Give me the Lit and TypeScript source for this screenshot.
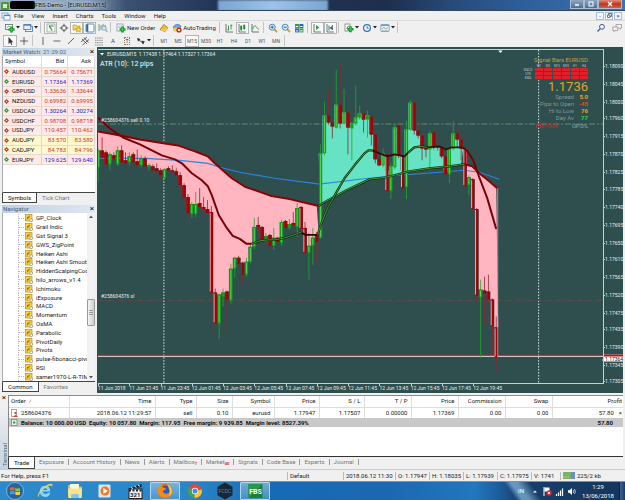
import { LitElement, html, svg, css } from "lit";
import { customElement } from "lit/decorators.js";
import { classMap } from "lit/directives/class-map.js";

/* ---------- shared styles ---------- */
const base = css`
  * { box-sizing: border-box; }
  button {
    font: inherit; color: inherit; background: none; border: 0; padding: 0; margin: 0;
    display: flex; align-items: center; justify-content: center; white-space: nowrap;
  }
  svg { display: block; flex: none; }
`;

/* ---------- icons ---------- */
const icon = (body: unknown, w = 10, h = 10) =>
  html`<svg width=${w} height=${h} viewBox="0 0 ${w} ${h}" aria-hidden="true">${body}</svg>`;

const plus = (x: number, y: number) =>
  svg`<path d="M${x} ${y - 3}v6M${x - 3} ${y}h6" stroke="#0a8f1c" stroke-width="2.4"/><path d="M${x} ${y - 2}v4M${x - 2} ${y}h4" stroke="#2fd045" stroke-width="1"/>`;

const I = {
  mdi: icon(svg`<rect x="1" y="2" width="6" height="5" fill="#fff" stroke="#5c93c8" stroke-width=".8"/><rect x="3" y="4" width="6" height="5" fill="#fff" stroke="#5c93c8" stroke-width=".8"/><path d="M3 4.6h6" stroke="#3f7fc0"/>`),
  newChart: icon(svg`<rect x=".5" y="1.5" width="7" height="5" fill="#fff" stroke="#4b7a56" stroke-width=".8"/><path d="M2 5l1.5-2 1.5 1" stroke="#2c8a3a" stroke-width=".7" fill="none"/>${plus(6.5, 6.5)}`),
  profiles: icon(svg`<rect x="2.5" y="3.5" width="7" height="5" fill="#fff" stroke="#4f83ba" stroke-width=".9"/><rect x=".8" y="1.5" width="7" height="5" fill="#e9f2fb" stroke="#4f83ba" stroke-width=".9"/><path d="M1 2.2h7" stroke="#3f7fc0"/>`),
  watch: icon(svg`<rect x="1" y="1" width="8" height="8" fill="#f7fbf5" stroke="#7aa27c" stroke-width=".7"/><path d="M3 3.2l2.5 3M3 3h2M6.5 7H4.8" stroke="#228b3a" stroke-width="1.1" fill="none"/><path d="M5 3h2.5" stroke="#3b6fb5"/>`),
  cross: icon(svg`<circle cx="5" cy="5" r="2.6" fill="none" stroke="#666" stroke-width=".9"/><path d="M5 .8v3M5 6.2v3M.8 5h3M6.2 5h3" stroke="#555" stroke-width=".9"/>`),
  nav: icon(svg`<path d="M1 2h3l1 1h3v4H1z" fill="#f3d36a" stroke="#b58a1a" stroke-width=".6"/><path d="M6.5 3.8l1 1.8 2 .3-1.5 1.3.4 2-1.9-1-1.9 1 .4-2L3.5 5.9l2-.3z" fill="#ffdf3a" stroke="#a67a10" stroke-width=".5"/>`),
  term: icon(svg`<rect x="1" y="1" width="8" height="8" rx="1" fill="#fff" stroke="#4b7cb8" stroke-width=".9"/><rect x="1.3" y="1.3" width="2" height="7.4" fill="#2d66a8"/>`),
  tester: icon(svg`<path d="M1 1v7M3 2v5M5 1v4M7 2v3" stroke="#5b9c72" stroke-width=".9"/><circle cx="6" cy="5" r="2.2" fill="#dcebf8" fill-opacity=".7" stroke="#6f93b8" stroke-width=".8"/><path d="M7.6 6.7L9.4 9" stroke="#8aa" stroke-width="1.2"/>`),
  order: icon(svg`<rect x="1" y="1" width="6" height="7" fill="#fff" stroke="#77889a" stroke-width=".7"/><path d="M2 3h4M2 4.5h3" stroke="#7d9cc0" stroke-width=".6"/>${plus(6.5, 6.5)}`),
  gold: icon(svg`<path d="M1 6.5L4.8 1.5 9 4.8 6 8.5z" fill="#f0bd28" stroke="#9a6b0c" stroke-width=".7"/><path d="M2 6.5l4 1.2 2.5-3" fill="none" stroke="#fbe79a" stroke-width=".8"/>`),
  auto: icon(svg`<path d="M1 4q4-5 8-1l-1 3H2z" fill="#6fa6d8" stroke="#3a6d9d" stroke-width=".6"/><ellipse cx="4" cy="6.5" rx="3" ry="2" fill="#e8c95c"/><circle cx="7" cy="7" r="2.6" fill="#d8261c"/><rect x="6" y="6" width="2" height="2" fill="#fff"/>`),
  bars: icon(svg`<path d="M4.5 2.5v5M3.3 6.5h1.2M7 1.5v5M7 2.5h1.3" stroke="#2c8c45" stroke-width=".9" fill="none"/><path d="M2 1v8h7" stroke="#456" stroke-width=".8" fill="none"/>`),
  candles: icon(svg`<path d="M2 1v8h7" stroke="#456" stroke-width=".8" fill="none"/><rect x="3.2" y="3" width="2" height="4" fill="#25a53c"/><rect x="6.2" y="2" width="2" height="4" fill="#25a53c"/><path d="M4.2 2v6M7.2 1v6" stroke="#14752a" stroke-width=".6"/>`),
  line: icon(svg`<path d="M2 1v8h7" stroke="#456" stroke-width=".8" fill="none"/><path d="M2.5 6.5Q4.5 1 6 3.5T9 6.5" stroke="#2c9c45" stroke-width=".9" fill="none"/>`),
  zin: icon(svg`<path d="M6 6l3 3" stroke="#d3a320" stroke-width="1.8"/><circle cx="4.2" cy="4.2" r="3" fill="#dff0fb" stroke="#3c7cb6" stroke-width=".9"/><path d="M2.7 4.2h3M4.2 2.7v3" stroke="#1f62a8"/>`),
  zout: icon(svg`<path d="M6 6l3 3" stroke="#d3a320" stroke-width="1.8"/><circle cx="4.2" cy="4.2" r="3" fill="#dff0fb" stroke="#3c7cb6" stroke-width=".9"/><path d="M2.7 4.2h3" stroke="#1f62a8"/>`),
  tile: icon(svg`<rect x="1" y="1" width="4" height="4" fill="#2f9d40"/><rect x="5.4" y="1" width="4" height="4" fill="#2c62b0"/><rect x="1" y="5.4" width="4" height="4" fill="#2c62b0"/><rect x="5.4" y="5.4" width="4" height="4" fill="#2f9d40"/><path d="M1.7 3.5h2.6M6.1 3.5h2.6M1.7 7.9h2.6M6.1 7.9h2.6" stroke="#fff"/>`),
  scroll: icon(svg`<path d="M2 1v8h7" stroke="#456" stroke-width=".8" fill="none"/><path d="M4 2v5l3.5-2.5z" fill="#3a9b4c"/>`),
  shift: icon(svg`<path d="M2 1v8h7M7.5 2v5" stroke="#456" stroke-width=".8" fill="none"/><path d="M4 2.5v5" stroke="#2c8c45"/><path d="M7 3L4.5 5 7 6.8z" fill="#355f9c"/>`),
  ind: icon(svg`<rect x="1" y="1" width="5" height="7" fill="#fff" stroke="#5e7d64" stroke-width=".7"/><path d="M3 6q0-3 2-3" stroke="#333" stroke-width=".7" fill="none"/>${plus(6.5, 6.2)}`),
  clock: icon(svg`<circle cx="5" cy="5" r="4" fill="#2e74b8"/><circle cx="5" cy="5" r="2.8" fill="#eef6fc"/><path d="M5 3v2.2h1.8" stroke="#345" stroke-width=".7" fill="none"/>`),
  tpl: icon(svg`<rect x=".8" y="1.5" width="8.4" height="7" rx=".8" fill="#eaf2f8" stroke="#6d93b4" stroke-width=".8"/><path d="M1 2.5h8" stroke="#6a9bc6"/><path d="M2 6l2-2 1.5 2L8 4.3" stroke="#7aa57f" stroke-width=".7" fill="none"/><path d="M2 7.3h6" stroke="#999" stroke-width=".6"/>`),
  arrow: icon(svg`<path d="M3.5 1v7l1.7-1.5L6.3 9l1-.5-1-2.3h2z" fill="#333"/>`),
  plusThin: icon(svg`<path d="M5 1v8M1 5h8" stroke="#444" stroke-width=".8"/>`),
  vline: icon(svg`<path d="M5 1v8" stroke="#555" stroke-width=".9"/>`),
  hline: icon(svg`<path d="M1.5 5h7" stroke="#555" stroke-width=".9"/>`),
  trend: icon(svg`<path d="M2 8l6-6" stroke="#555" stroke-width=".9"/>`),
  chan: icon(svg`<path d="M1 6l6-5M2.5 9L9 3.500M2 3l5 5M4 1.5l4.5 5" stroke="#444" stroke-width=".8"/>`),
  fib: icon(svg`<path d="M1 2h8M1 4.3h8M1 6.6h8M1 9h8" stroke="#666" stroke-width=".7" stroke-dasharray="1.5 .6"/>`),
  arrows: icon(svg`<path d="M1 2l3.5 1L2 5.5zM5.5 4.5L9 5.5 6.5 8z" fill="#333"/><path d="M3 4l5 4" stroke="#333" stroke-width=".8"/>`),
  search: icon(svg`<circle cx="6" cy="3.8" r="2.4" fill="#fff" stroke="#3d4fa0" stroke-width="1"/><path d="M4.3 5.6L1.5 8.5" stroke="#3d4fa0" stroke-width="1.3"/>`),
  chat: icon(svg`<path d="M4 1.5h5.5v3.5H8.5v1.3L7.3 5H4z" fill="#f4f4f4" stroke="#888" stroke-width=".7"/><path d="M.8 4h5v3.5H3L2 8.8V7.5H.8z" fill="#f4f4f4" stroke="#888" stroke-width=".7"/>`),
};

/* ---------- market watch ---------- */
type Quote = [string, string, string, "up" | "down", "pink" | "yellow"];
const quotes: Quote[] = [
  ["AUDUSD", "0.75664", "0.75671", "down", "pink"],
  ["EURUSD", "1.17364", "1.17369", "up", "pink"],
  ["GBPUSD", "1.33636", "1.33644", "down", "pink"],
  ["NZDUSD", "0.69982", "0.69995", "down", "pink"],
  ["USDCAD", "1.30264", "1.30274", "up", "pink"],
  ["USDCHF", "0.98708", "0.98718", "down", "pink"],
  ["USDJPY", "110.457", "110.462", "down", "pink"],
  ["AUDJPY", "83.570", "83.580", "down", "yellow"],
  ["CADJPY", "84.783", "84.796", "down", "yellow"],
  ["EURJPY", "129.625", "129.640", "up", "pink"],
];

@customElement("market-watch")
class MarketWatch extends LitElement {
  static styles = [base, css`
    :host { display: flex; flex-direction: column; min-height: 0; min-width: 0; }
    .title { height: 8px; display: flex; align-items: center; justify-content: space-between; background: linear-gradient(90deg, #bfd0e0, #dfe7ef); color: #4c6478; padding: 0 1px; }
    .title button { color: #111; font-size: 8px; line-height: 8px; }
    .box { flex: 1; background: #fff; border-left: 1px solid #aaa; border-bottom: 1px solid #444; overflow: hidden; }
    table { width: 100%; border-collapse: collapse; table-layout: fixed; height: 109px; line-height: 8px; }
    th { font-weight: 400; text-align: right; padding: 0 3px 0 0; height: 11px; border-right: 1px solid #ddd; border-bottom: 1px solid #ddd; color: #222; }
    th:first-child { width: 38px; text-align: left; padding-left: 2px; }
    td { padding: 0 1px; text-align: right; border-right: 1px solid #e3d5d0; border-bottom: 1px solid #e6d8d2; }
    td:first-child { text-align: left; color: #111; }
    .pink { background: #ffeae8; }
    .yellow { background: #fff8cf; }
    .down { color: #d0382c; }
    .up { color: #2722c8; }
    .sym { display: flex; align-items: center; gap: 3px; }
    .tabs { height: 10px; display: flex; }
    .tabs button { padding: 0 5px; color: #777; }
    .tabs .on { background: #fff; color: #111; border: 1px solid #444; border-top: 0; }
  `];
  render() {
    return html`
      <div class="title"><span>Market Watch: 21:29:02</span><button aria-label="Close">×</button></div>
      <div class="box"><table>
        <thead><tr><th>Symbol</th><th>Bid</th><th>Ask</th></tr></thead>
        <tbody>${quotes.map(([s, b, a, d, c]) => html`<tr class=${c}>
          <td><span class="sym"><svg width="5" height="5" viewBox="0 0 5 5"><path d="M2.5 0L5 2.5 2.5 5 0 2.5z" fill=${d === "up" ? "#2ea043" : "#c0442c"}/><circle cx="2.5" cy="2.5" r=".6" fill="#fff"/></svg>${s}</span></td>
          <td class=${d}>${b}</td><td class=${d}>${a}</td></tr>`)}</tbody>
      </table></div>
      <div class="tabs"><button class="on">Symbols</button><button>Tick Chart</button></div>`;
  }
}

/* ---------- navigator ---------- */
const indicators = ["GP_Clock", "Grail Indic", "Gst Signal 3", "GWS_ZigPoint", "Heiken Ashi", "Heiken Ashi Smoothed", "HiddenScalpingCode", "hilo_arrows_v1.4", "Ichimoku", "iExposure", "MACD", "Momentum", "OsMA", "Parabolic", "PivotDaily", "Pivots", "pulse-fibonacci-pivot", "RSI", "samer1970-L-R-TIME"];

@customElement("nav-panel")
class NavPanel extends LitElement {
  static styles = [base, css`
    :host { display: flex; flex-direction: column; min-height: 0; min-width: 0; }
    .title { height: 8px; display: flex; align-items: center; justify-content: space-between; background: linear-gradient(90deg, #bfd0e0, #dfe7ef); color: #4c6478; padding: 0 1px; }
    .title button { color: #111; font-size: 8px; line-height: 8px; }
    .box { flex: 1; min-height: 0; display: flex; background: #fff; border-left: 1px solid #aaa; border-bottom: 1px solid #444; }
    ul { flex: 1; min-width: 0; list-style: none; margin: 0; padding: 1px 0 0 15px; display: flex; flex-direction: column; }
    li { flex: 1; min-height: 0; display: flex; align-items: center; gap: 3px; white-space: nowrap; overflow: hidden; border-left: 1px dotted #bbb; color: #222; }
    li::before { content: ""; width: 5px; border-top: 1px dotted #bbb; margin-right: -2px; flex: none; }
    .bar { width: 8px; flex: none; background: #f2f2f2; display: flex; flex-direction: column; align-items: center; justify-content: space-between; padding: 2px 0; }
    .rail { flex: 1; width: 100%; padding-top: 81px; }
    .thumb { height: 27px; border: 1px solid #9a9a9a; border-radius: 1px; background: linear-gradient(90deg, #f4f4f4, #cfcfcf); display: flex; align-items: center; justify-content: center; }
    .tabs { height: 10px; display: flex; }
    .tabs button { padding: 0 5px; color: #777; }
    .tabs .on { background: #fff; color: #111; border: 1px solid #444; border-top: 0; }
  `];
  render() {
    return html`
      <div class="title"><span>Navigator</span><button aria-label="Close">×</button></div>
      <div class="box">
        <ul>${indicators.map((n) => html`<li>
          <svg width="8" height="8" viewBox="0 0 8 8"><rect x=".5" y=".5" width="6.5" height="6.5" fill="#f6d04c" stroke="#b78f1c" stroke-width=".7"/><path d="M2 5.5Q2.5 2 5 2M2 3.8h2.5" stroke="#8a5c00" stroke-width=".7" fill="none"/><circle cx="6.2" cy="6.2" r="1.4" fill="#fff" stroke="#777" stroke-width=".6"/></svg>${n}</li>`)}</ul>
        <div class="bar"><svg width="4" height="3"><path d="M0 3l2-2.5L4 3z" fill="#555"/></svg>
          <div class="rail"><div class="thumb"><svg width="4" height="5"><path d="M0 .5h4M0 2.500h4M0 4.5h4" stroke="#777" stroke-width=".7"/></svg></div></div>
          <svg width="4" height="3"><path d="M0 0l2 2.5L4 0z" fill="#555"/></svg></div>
      </div>
      <div class="tabs"><button class="on">Common</button><button>Favorites</button></div>`;
  }
}

/* ---------- chart data: colour, high, body top, body bottom, low ---------- */
type Candle = ["g" | "r", number, number, number, number];
const candles: Candle[] = [
  ["g", 148, 150, 167, 181], ["r", 137, 150, 157, 159], ["r", 150, 152, 164, 167], ["g", 152, 154, 164, 170],
  ["r", 152, 155, 159, 163], ["g", 146, 150, 164, 166], ["r", 145, 150, 162, 164], ["r", 152, 160, 163, 165],
  ["g", 152, 156, 162, 165], ["r", 152, 154, 162, 167], ["r", 149, 161, 165, 168], ["g", 155, 158, 165, 167],
  ["r", 156, 158, 166, 167], ["g", 163, 165, 167, 170], ["r", 164, 166, 170, 172], ["r", 163, 168, 171, 173],
  ["r", 168, 170, 175, 179], ["g", 168, 169, 178, 180], ["r", 166, 168, 170, 171], ["r", 165, 170, 171, 173],
  ["r", 168, 171, 175, 177], ["r", 172, 175, 185, 190], ["r", 183, 185, 197, 201], ["r", 194, 197, 213, 217],
  ["g", 202, 204, 214, 218], ["g", 192, 204, 214, 217], ["r", 188, 203, 207, 209], ["r", 197, 207, 209, 214],
  ["r", 200, 209, 213, 217], ["r", 206, 212, 293, 335], ["r", 289, 293, 324, 335], ["g", 294, 295, 324, 340],
  ["g", 289, 293, 297, 307], ["r", 291, 292, 300, 330], ["g", 264, 269, 301, 304], ["g", 257, 258, 269, 278],
  ["r", 256, 258, 264, 266], ["r", 262, 263, 275, 285], ["g", 258, 262, 275, 277], ["g", 244, 247, 262, 264],
  ["g", 218, 227, 247, 250], ["r", 217, 225, 227, 233], ["r", 226, 227, 240, 243], ["g", 233, 236, 239, 242],
  ["r", 234, 235, 246, 250], ["g", 228, 238, 246, 250], ["r", 237, 238, 242, 244], ["g", 220, 222, 243, 246],
  ["r", 220, 221, 228, 229], ["g", 219, 224, 228, 230], ["r", 212, 223, 225, 229], ["g", 203, 208, 227, 237],
  ["r", 206, 207, 229, 231], ["r", 222, 228, 253, 255], ["g", 233, 246, 253, 280], ["g", 228, 238, 246, 265],
  ["r", 232, 234, 242, 263], ["g", 144, 153, 238, 239], ["g", 101, 115, 153, 155], ["r", 88, 115, 122, 124],
  ["r", 120, 122, 126, 138], ["g", 69, 104, 127, 128], ["r", 63, 104, 123, 128], ["g", 88, 112, 123, 124],
  ["r", 111, 112, 127, 154], ["g", 121, 123, 128, 160], ["g", 85, 117, 123, 125], ["g", 105, 113, 117, 119],
  ["r", 112, 113, 119, 132], ["g", 110, 115, 119, 137], ["r", 115, 116, 134, 145], ["r", 133, 134, 159, 163],
  ["r", 158, 159, 165, 166], ["g", 148, 153, 165, 167], ["r", 153, 154, 191, 192], ["g", 162, 166, 191, 199],
  ["g", 123, 127, 167, 169], ["r", 124, 125, 155, 158], ["r", 154, 155, 188, 190], ["g", 120, 129, 187, 199],
  ["g", 99, 102, 129, 130], ["r", 100, 102, 130, 134], ["r", 124, 130, 135, 138], ["r", 133, 135, 148, 160],
  ["r", 145, 147, 149, 157], ["g", 130, 133, 149, 171], ["r", 128, 132, 147, 149], ["r", 136, 145, 147, 150],
  ["r", 145, 147, 156, 158], ["r", 155, 156, 174, 180], ["g", 147, 148, 174, 183], ["g", 121, 133, 148, 150],
  ["r", 122, 133, 139, 147], ["r", 130, 139, 148, 160], ["r", 147, 148, 186, 187], ["g", 175, 177, 185, 195],
  ["r", 178, 179, 209, 210], ["r", 208, 209, 296, 301], ["g", 280, 290, 298, 359], ["r", 277, 291, 294, 325],
  ["r", 275, 292, 300, 303], ["r", 299, 300, 327, 356], ["r", 317, 328, 358, 373],
];
const cx = (i: number) => 98.2 + 3.91 * i;

type P = [number, number];
const slow: P[] = [[98, 131], [115, 134], [140, 139], [165, 143], [178, 145], [195, 151], [208, 156], [215, 163], [232, 178], [246, 187], [255, 190], [272, 196], [290, 199], [319, 206], [325, 202], [347, 190], [370, 179], [387, 177], [410, 171], [430, 168], [450, 166], [465, 164], [473, 166], [480, 173], [490, 181], [498, 188]];
const fastA: P[] = [[98, 117], [110, 128], [123, 137], [140, 144], [162, 155], [175, 159], [182, 163], [192, 173], [202, 180], [208, 186], [212, 195], [219, 215], [227, 228], [233, 236], [240, 239], [247, 244], [252, 244]];
const fastB: P[] = [[252, 244], [260, 241], [268, 240], [275, 240], [285, 238], [297, 234], [302, 232]];
const fastC: P[] = [[302, 233], [306, 235], [318, 235]];
const fastD: P[] = [[318, 235], [322, 223], [328, 208], [337, 192], [345, 178], [355, 165], [365, 153], [369, 150], [373, 150]];
const fastE: P[] = [[373, 150], [380, 153], [388, 156], [395, 154], [405, 156], [409, 152]];
const fastF: P[] = [[409, 152], [415, 147], [422, 146], [428, 147]];
const fastG: P[] = [[428, 147], [440, 146], [447, 149], [452, 147], [462, 147], [467, 149]];
const fastH: P[] = [[467, 149], [474, 160], [480, 177], [488, 198], [497, 229]];
const blue: P[] = [[98, 158], [145, 158], [180, 160], [208, 163], [220, 167], [240, 172], [275, 178], [320, 184], [360, 179], [400, 175], [440, 172], [465, 170], [480, 172], [500, 179]];
const pts = (p: P[]) => p.map((q) => q.join(",")).join(" ");
const slowAt = (x: number) => {
  const k = Math.max(1, slow.findIndex((q) => q[0] >= x));
  const [a, b] = [slow[k - 1], slow[k]];
  return a[1] + ((b[1] - a[1]) * (x - a[0])) / (b[0] - a[0]);
};
const area = (from: number, to: number, edge: (c: Candle) => number) => {
  const idx = Array.from({ length: to - from + 1 }, (_, k) => from + k);
  const outer = idx.flatMap((i): P[] => [[cx(i) - 2, edge(candles[i])], [cx(i) + 2, edge(candles[i])]]);
  const inner = idx.map((i): P => [cx(i), slowAt(Math.max(98, cx(i)))]).reverse();
  return pts([...outer, ...inner]);
};

const prices = [18090, 18045, 18000, 17960, 17915, 17870, 17825, 17785, 17740, 17695, 17650, 17610, 17565, 17520, 17475, 17435, 17390, 17345, 17305];
const pricePct = (p: number) => ((66 - 49 + (18090 - p) * 0.4017) / 335) * 100;
const dates = ["11 Jun 2018", "11 Jun 21:45", "11 Jun 23:45", "12 Jun 01:45", "12 Jun 03:45", "12 Jun 05:45", "12 Jun 07:45", "12 Jun 09:45", "12 Jun 11:45", "12 Jun 13:45", "12 Jun 15:45", "12 Jun 17:45", "12 Jun 19:45"];

@customElement("price-chart")
class PriceChart extends LitElement {
  static styles = [base, css`
    :host { display: grid; grid-template: minmax(0, 1fr) 9px / minmax(0, 1fr) 19px; background: #2f4f4f; padding: 2px 0 0 1px; color: #e8eeee; font-size: 5px; line-height: 6px; min-height: 0; }
    .plot { position: relative; border: 1px solid #c5d0d0; border-width: 1px 1px 1px 0; min-height: 0; }
    .graph { position: absolute; inset: 0; width: 100%; height: 100%; }
    .head { position: absolute; left: 2px; top: 1px; display: flex; gap: 3px; align-items: center; white-space: pre; }
    .atr { position: absolute; left: 2px; top: 10px; font-size: 7px; line-height: 8px; color: #fff; }
    .tag { position: absolute; left: 3px; }
    .sell { top: 20%; }
    .sl { top: 73%; }
    .info { position: absolute; right: 15px; top: 6px; width: 70px; display: flex; flex-direction: column; align-items: flex-end; color: #859494; font-size: 6px; line-height: 7px; }
    .info .name { color: #c4a23c; line-height: 8px; }
    .sig { display: grid; grid-template-columns: 12px repeat(6, 8px); column-gap: 1px; font-size: 3px; line-height: 4px; text-align: center; color: #b8c4c4; }
    .sig .cell { background: #e02028; border-bottom: 1px solid #8c2a30; height: 4px; }
    .big { font-size: 13px; line-height: 13px; color: #e0a520; }
    dl { margin: 0; display: grid; grid-template-columns: auto 12px; column-gap: 2px; text-align: right; }
    dd { margin: 0; font-weight: 700; }
    .o { color: #f0a020; } .r { color: #e04a20; } .g { color: #22dd44; }
    .foot { display: flex; justify-content: space-between; width: 53px; color: #9aa6a6; margin-top: 1px; }
    .foot b { font-weight: 400; color: #e01818; }
    .axis { position: relative; }
    .axis span { position: absolute; left: 1px; transform: translateY(-50%); }
    .axis span::before { content: ""; position: absolute; left: -2px; top: 3px; width: 2px; border-top: 1px solid #c5d0d0; }
    .axis .bid { right: 0; left: 0; padding-left: 1px; background: #fff; color: #111; border-top: 2px solid #b01818; line-height: 5px; }
    .dates { display: flex; padding-top: 1px; }
    .dates span { flex: 0 0 6.18%; white-space: nowrap; position: relative; }
    .dates span::before { content: ""; position: absolute; left: 0; top: -1px; height: 2px; border-left: 1px solid #c5d0d0; }
  `];
  render() {
    const poly = (p: P[], c: string, w: number) => svg`<polyline points=${pts(p)} fill="none" stroke=${c} stroke-width=${w} stroke-linejoin="round"/>`;
    const lined = (p: P[]) => svg`${poly(p, "#0c2c0c", 2.2)}${poly(p, "#5fae3c", 0.8)}`;
    const upper = (c: Candle) => c[0] === "g" ? c[2] : Math.min(c[3], 170);
    const color = { g: "#12a018", r: "#a00008" };
    return html`
      <div class="plot">
        <svg class="graph" viewBox="98 49 506 335" preserveAspectRatio="none">
          <path d="M164 49V384M539.5 49V384" stroke="#dfe8e8" stroke-width="1" stroke-dasharray="1.5 1.5"/>
          <path d="M98 123.5H604" stroke="#6f9c7c" stroke-width=".8" stroke-dasharray="6 2 2 2"/>
          <path d="M98 301H604" stroke="#6c4642" stroke-width=".8" stroke-dasharray="5 2 1 2"/>
          <path d="M98 356H604" stroke="#a02a30"/><path d="M98 357.2H604" stroke="#f0dede"/>
          <polygon points=${area(0, 56, (c) => c[2])} fill="#ffb6c1"/>
          <polygon points=${area(57, 93, upper)} fill="#66e3c4"/>
          <polygon points=${area(94, 102, (c) => c[2])} fill="#ffb6c1"/>
          ${poly(blue, "#2a86e0", 1.2)}
          ${candles.map(([k, h, t, b, l], i) => {
            const x = cx(i);
            const below = b > slowAt(Math.max(98, Math.min(x, 498)));
            return svg`<path d="M${x} ${h}V${l}" stroke=${k === "g" ? "#22a82a" : "#8e2630"} stroke-width=".8"/>
              <rect x=${x - 1.6} y=${t} width="3.2" height=${Math.max(1, b - t)} fill=${color[k]}/>
              ${b - t > 5 ? svg`<rect x=${x - (k === "g" ? 0.5 : 1.6)} y=${t + 1} width=".9" height=${b - t - 2} fill=${k === "g" ? "#55dd50" : below && b - t > 20 ? "#ffb6c1" : "#b01820"}/>` : ""}`;
          })}
          ${poly(slow.slice(0, 14), "#8b0000", 2)}${lined(slow.slice(13, 22))}${poly(slow.slice(21), "#8b0000", 2)}
          ${poly(fastA, "#780004", 2)}${lined(fastB)}${poly(fastC, "#2a0808", 1.8)}${lined(fastD)}
          ${poly(fastE, "#3a0808", 1.8)}${lined(fastF)}${poly(fastG, "#3a1408", 1.8)}${poly(fastH, "#780004", 2)}
          <path d="M498.5 188V358" stroke="#d89aa4" stroke-width=".8"/>
          <path d="M499 49.5h4.500l-2.2 2.5z" fill="#fff"/>
        </svg>
        <div class="head"><svg width="4" height="3"><path d="M0 0h4L2 2.5z" fill="#fff"/></svg>EURUSD,M15  1.17438 1.17464 1.17327 1.17364</div>
        <div class="atr">ATR (10): 12 pips</div>
        <div class="tag sell">#258604376 sell 0.10</div>
        <div class="tag sl">#258604376 sl</div>
        <div class="info">
          <div class="name">Signal Bars EURUSD</div>
          <div class="sig"><i></i>${["M1", "M5", "M15", "M30", "H1", "H4"].map((t) => html`<span>${t}</span>`)}
            ${["MACD", "STR", "EMA"].map((t) => html`<span>${t}</span>${[0, 1, 2, 3, 4, 5].map(() => html`<span class="cell"></span>`)}`)}</div>
          <div class="big">1.1736</div>
          <dl><dt>Spread</dt><dd class="o">5.0</dd><dt>Pips to Open</dt><dd class="r">-45</dd><dt>Hi to Low</dt><dd class="o">76</dd><dt>Day Av</dt><dd class="g">77</dd></dl>
          <div class="foot"><b>HR-/50A</b><span>UP.0%</span></div>
        </div>
      </div>
      <div class="axis">${prices.map((p) => html`<span style="top:${pricePct(p)}%">1.${p}</span>`)}<span class="bid" style="top:${pricePct(17364)}%">1.17364</span></div>
      <div class="dates">${dates.map((d) => html`<span>${d}</span>`)}</div>`;
  }
}

/* ---------- terminal ---------- */
const cols: [string, string][] = [["Order", "c60"], ["Time", "c86"], ["Type", "c41"], ["Size", "c36"], ["Symbol", "c42"], ["Price", "c45"], ["S / L", "c45"], ["T / P", "c47"], ["Price", "c47"], ["Commission", "c47"], ["Swap", "c47"], ["Profit", ""]];
const row = ["2018.06.12 11:29:57", "sell", "0.10", "eurusd", "1.17947", "1.17507", "0.00000", "1.17369", "0.00", "0.00"];
const tabs: [string, string][] = [["Trade", ""], ["Exposure", ""], ["Account History", ""], ["News", ""], ["Alerts", ""], ["Mailbox", "7"], ["Market", "40"], ["Signals", ""], ["Code Base", ""], ["Experts", ""], ["Journal", ""]];

@customElement("terminal-panel")
class TerminalPanel extends LitElement {
  static styles = [base, css`
    :host { display: flex; height: 74px; background: #f0f0f0; }
    .side { width: 8px; background: linear-gradient(#f0f0f0 15%, #c3d2e0); display: flex; flex-direction: column; align-items: center; justify-content: space-between; color: #4c6478; padding: 0 0 3px; }
    .side span { writing-mode: vertical-rl; transform: rotate(180deg); line-height: 7px; }
    .side button { color: #111; font-size: 8px; line-height: 6px; }
    .main { flex: 1; min-width: 0; display: flex; flex-direction: column; margin-right: 2px; }
    .box { flex: 1; background: #fff; border: 1px solid #888; border-width: 1px 0 1px 1px; border-bottom-color: #333; }
    table { width: 100%; table-layout: fixed; border-collapse: collapse; color: #222; line-height: 8px; }
    .c60 { width: 60px; } .c86 { width: 86px; } .c41 { width: 41px; } .c36 { width: 36px; } .c42 { width: 42px; } .c45 { width: 45px; } .c47 { width: 47px; }
    th, td { font-weight: 400; text-align: right; padding: 0 3px 0 2px; border-right: 1px solid #ddd; white-space: nowrap; }
    th { height: 11px; border-bottom: 1px solid #ddd; }
    td { height: 11px; }
    th:first-child, td:first-child { text-align: left; }
    th:last-child, td:last-child { border-right: 0; padding-right: 1px; }
    .lab { display: flex; align-items: center; gap: 3px; }
    .end { justify-content: flex-end; gap: 5px; }
    .bal td { background: #c8c8c8; font-weight: 700; height: 9px; border: 0; color: #111; }
    .bal td:last-child { padding-right: 10px; }
    .tabs { height: 12px; display: flex; color: #777; align-items: stretch; }
    .tabs button { padding: 0 5px 2px 4px; position: relative; }
    .tabs button:not(.on)::after { content: ""; position: absolute; right: 0; top: 2px; height: 6px; border-right: 1px solid #999; }
    .tabs .on { background: #fff; color: #111; border: 1px solid #444; border-top: 0; padding: 0 5px; }
    .tabs sub { font-size: 4px; line-height: 4px; color: #d82020; font-weight: 700; align-self: flex-end; margin-bottom: 1px; }
  `];
  render() {
    return html`
      <div class="side"><button aria-label="Close">×</button><span>Terminal</span></div>
      <div class="main">
        <div class="box"><table>
          <thead><tr>${cols.map(([n, c], i) => html`<th class=${c}>${n}${i === 0 ? html`&nbsp; ⁄` : ""}</th>`)}</tr></thead>
          <tbody>
            <tr><td><span class="lab"><svg width="7" height="8" viewBox="0 0 7 8"><rect x=".5" y=".5" width="5" height="7" fill="#fff" stroke="#889" stroke-width=".7"/><circle cx="4.5" cy="4" r="1.2" fill="#d64530"/><path d="M2.5 8q2-4 4.5 0z" fill="#d64530"/></svg>258604376</span></td>
              ${row.map((v) => html`<td>${v}</td>`)}
              <td><span class="lab end">57.80<button aria-label="Close order">×</button></span></td></tr>
            <tr class="bal"><td colspan="11"><span class="lab"><svg width="7" height="7" viewBox="0 0 7 7"><rect x=".5" y=".5" width="5.5" height="6" fill="#e4f2e4" stroke="#5a8a62" stroke-width=".7"/><circle cx="3.2" cy="3.5" r="1.2" fill="#3d9a4c"/></svg>Balance: 10 000.00 USD&nbsp; Equity: 10 057.80&nbsp; Margin: 117.95&nbsp; Free margin: 9 939.85&nbsp; Margin level: 8527.39%</span></td><td>57.80</td></tr>
          </tbody></table></div>
        <div class="tabs">${tabs.map(([t, n], i) => html`<button class=${classMap({ on: i === 0 })}>${t}${n ? html`<sub>${n}</sub>` : ""}</button>`)}</div>
      </div>`;
  }
}

/* ---------- taskbar ---------- */
const task = (b: unknown) => html`<svg width="20" height="18" viewBox="0 0 20 18" aria-hidden="true">${b}</svg>`;
const T = {
  start: task(svg`<circle cx="10" cy="9" r="8.5" fill="#2a6496" stroke="#8cc4e8" stroke-width=".8"/><path d="M5 6q2.5-1.5 4.5-.3V8.5Q7 7.5 5 8.7z" fill="#f0642c"/><path d="M10.3 6q2.3 1 4.7 0v2.7q-2.4 1-4.7 0z" fill="#8cc83c"/><path d="M5 9.5q2.5-1.3 4.5-.2v3.2Q7 11.5 5 12.5z" fill="#3ca0e8"/><path d="M10.3 9.500q2.3 1 4.7 0v3q-2.4 1-4.7 0z" fill="#fccc38"/>`),
  ie: task(svg`<path d="M15 9.5H7.5q.5 2.5 3 2.5 1.700 0 2.5-1.2h2.5Q14 15 10.4 15 5 14.5 4.8 9.3 5 4 10.3 3.7 15.6 4 15 9.5zM7.6 8h4.8Q12 6 10 6 8 6 7.6 8z" fill="#8ed4fa" fill-rule="evenodd"/><path d="M3.5 15.5Q1 12 8 6q6-5 9-4 1 .5 0 3 0-2-2-1.5-4 1-8 5-4 4.5-3.5 7z" fill="#f4cf4a"/>`),
  folder: task(svg`<path d="M3 3h6l1 1.5h7V15H3z" fill="#e6b94c"/><rect x="5" y="2" width="9" height="7" fill="#fdf6d8"/><path d="M3 6.5h14L16.5 16h-13z" fill="#fbe391"/><rect x="6" y="12" width="8" height="4" rx="1" fill="#8ac4e8"/>`),
  wmp: task(svg`<rect x="3.5" y="2.5" width="12" height="13" rx="1" fill="#d9e6ee"/><circle cx="10" cy="9" r="4.5" fill="#f07818"/><path d="M8.3 6v6l4.7-3z" fill="#fff"/>`),
  clap: task(svg`<rect x="4" y="7" width="13" height="9.5" fill="#f2f2f2" stroke="#222"/><path d="M3.5 6.5L16.5 2v3L4 7.5z" fill="#1c1c1c"/><path d="M6 5.5l2 1M9.5 4.3l2 1M13 3l2 1.3" stroke="#fff"/><path d="M4 8.5h13" stroke="#222" stroke-width="2" stroke-dasharray="2 1.5"/><text x="5" y="15" font-size="6" font-weight="700" fill="#222">321</text>`),
  ff: task(svg`<circle cx="10" cy="9" r="7.3" fill="#e86a18"/><circle cx="10.5" cy="8" r="4.5" fill="#3558b8"/><path d="M3 6Q5 2 8 2q-2 2 0 3.5 3 0 3 2-3 0-3 2.5 2 3 6 1 3-2 1.5-7 4 5 .5 9.5Q11 17.5 5.5 14.5 1.5 11 3 6z" fill="#f08a1c"/><path d="M12 2q5 2 5 8-1 3-3 4 2-5-2-12z" fill="#fcc832"/>`),
  chrome: task(svg`<circle cx="10" cy="9" r="7" fill="#e2483a"/><path d="M10 9L3.9 5.5A7 7 0 0 0 9.5 16z" fill="#3aa757"/><path d="M10 9l6.8-1.6A7 7 0 0 1 9.5 16z" fill="#fbc62e"/><circle cx="10" cy="9" r="3.2" fill="#fff"/><circle cx="10" cy="9" r="2.5" fill="#4688f0"/>`),
  fcdc: task(svg`<path d="M10 .5l7.5 4.3v8.4L10 17.5l-7.5-4.3V4.8z" fill="#1c2630"/><text x="10" y="11" font-size="5" text-anchor="middle" fill="#3f8fc8">FCDC</text>`),
  fbs: task(svg`<rect x="3.5" y="2" width="14" height="14" fill="#17803a"/><path d="M3.5 2h14L3.5 16z" fill="#23994a"/><text x="10.5" y="12" font-size="7" font-weight="700" text-anchor="middle" fill="#fff">FBS</text>`),
};
const apps: [string, unknown, boolean][] = [["Start", T.start, false], ["Internet Explorer", T.ie, false], ["Explorer", T.folder, false], ["Media Player", T.wmp, false], ["Player Classic", T.clap, false], ["Firefox", T.ff, true], ["Chrome", T.chrome, false], ["FCDC", T.fcdc, false], ["FBS", T.fbs, true]];

@customElement("task-bar")
class TaskBar extends LitElement {
  static styles = [base, css`
    :host { display: flex; align-items: stretch; height: 19px; color: #fff; border-top: 1px solid #6d96b8;
      background: linear-gradient(56deg, transparent 81%, #8cc0e4aa 82%, #8cc0e4aa 83%, transparent 85%), linear-gradient(90deg, #2c8acb, #2a86c8 30%, #176ab4 44%, #1c68b0 62%, #2277bd 76%, #1c5c9a 80%, #173f6b 83%, #14365e); }
    .apps { display: flex; flex: 1; }
    .apps button { width: 30px; border: 1px solid transparent; }
    .apps .on { background: linear-gradient(#9fc8e6aa, #5a9ed0aa); border-color: #b4d6ee; border-radius: 1px; }
    .tray { display: flex; align-items: center; gap: 3px; }
    .lang { margin-right: 4px; }
    .clock { width: 38px; text-align: center; line-height: 9px; }
    .show { width: 6px; border-left: 1px solid #0b2340; margin-left: 2px; background: linear-gradient(90deg, #3c6490, #1a3c64); }
  `];
  render() {
    return html`
      <div class="apps">${apps.map(([n, g, on]) => html`<button class=${classMap({ on })} aria-label=${n}>${g}</button>`)}</div>
      <div class="tray">
        <span class="lang">IN</span>
        <svg width="8" height="8" viewBox="0 0 8 8"><path d="M2 5.5l2-2 2 2z" fill="#fff"/></svg>
        <svg width="10" height="10" viewBox="0 0 10 10"><path d="M2 1v9" stroke="#fff"/><path d="M2.5 1.5h5v4h-5z" fill="#fff"/><circle cx="7" cy="7" r="2.7" fill="#d82a2a"/><path d="M5.9 5.9l2.2 2.2M8.1 5.9L5.9 8.1" stroke="#fff" stroke-width=".8"/></svg>
        <svg width="9" height="9" viewBox="0 0 9 9"><path d="M1.5 9V7M3.5 9V5.5M5.5 9V3.5M7.5 9V1.5" stroke="#fff" stroke-width="1.2"/></svg>
        <svg width="9" height="9" viewBox="0 0 9 9"><path d="M1 3.2h1.5L5 1v7L2.5 5.8H1z" fill="#fff"/><path d="M6.2 3q1 1.5 0 3M7.5 2q1.6 2.5 0 5" stroke="#fff" stroke-width=".7" fill="none"/></svg>
        <div class="clock">1:29<br>13/06/2018</div>
      </div>
      <div class="show"></div>`;
  }
}

/* ---------- main window ---------- */
const btn = (label: string, g: unknown, on = false, drop = false) =>
  html`<button class=${classMap({ tb: true, on, drop })} aria-label=${label}>${g}${drop ? html`<svg width="4" height="3"><path d="M0 0h4L2 2.5z" fill="#222"/></svg>` : ""}</button>`;
const sep = html`<span class="sep"></span>`;

@customElement("app-root")
class AppRoot extends LitElement {
  static styles = [base, css`
    :host { display: flex; flex-direction: column; height: 100vh; overflow: hidden; background: #f0f0f0; font: 6px/8px Roboto, "Liberation Sans", sans-serif; color: #222; }
    .title { height: 11px; flex: none; display: flex; align-items: center; overflow: hidden; border-bottom: 1px solid #33465c;
      background: linear-gradient(90deg, #9fb4ca, #8aa3bd 14%, #3c5271 20%, #233655 34%, #1d2f4b 62%, #274a78 72%, #2d5f9c 84%, #3c74ac); }
    .title .logo { margin: 0 1px; }
    .mask { width: 25px; height: 8px; background: #000; border-radius: 2px; }
    .title h1 { margin: 0; font: inherit; color: #0c1420; text-shadow: 0 0 3px #fff; }
    .behind { height: 11px; width: 110px; margin-left: 112px; background: linear-gradient(90deg, #7ba5d0, #9cc4ea, #7ba5d0); filter: blur(1px); }
    .win { margin-left: auto; display: flex; height: 9px; align-self: flex-start; margin-right: 3px; }
    .win button { width: 14px; height: 9px; border: 1px solid #a9bdd2; border-top: 0; background: linear-gradient(#8ea8c4, #4c6e94); color: #fff; }
    .win .x { width: 24px; background: linear-gradient(#e09080, #c23420 50%, #d8603c); }
    .menu { height: 10px; flex: none; display: flex; align-items: center; padding: 0 3px 0 1px; border-bottom: 1px solid #dadada; }
    .menu nav { display: flex; gap: 8px; margin: 0 auto 0 3px; }
    .mdi { display: flex; gap: 1px; }
    .mdi button { width: 8px; height: 8px; border: 1px solid #a9c0da; background: #f4f8fc; color: #345; }
    .bar { height: 13px; flex: none; display: flex; align-items: center; padding-left: 3px; }
    .bar .tb { width: 13px; height: 12px; border: 1px solid transparent; }
    .bar .drop { width: 18px; gap: 1px; padding-left: 1px; }
    .bar .on { border-color: #b4b4b4; background: #fafafa; }
    .bar .txt { gap: 1px; padding: 0 2px; height: 12px; }
    .bar .far { margin-left: auto; margin-right: 2px; display: flex; gap: 3px; }
    .sep { width: 4px; height: 11px; border-left: 1px solid #c4c4c4; margin-left: 1px; }
    .two .tb { width: 14px; }
    .two .drop { width: 18px; }
    .two .tf { font-size: 5px; color: #555; }
    .two .a { color: #444; }
    .two .t { font-size: 5px; }
    .t span { border: 1px dotted #777; padding: 0 1px; line-height: 6px; }
    .body { flex: 1; min-height: 0; display: grid; grid-template-columns: 95px minmax(0, 1fr); column-gap: 2px; padding: 0 2px 2px 0; }
    .left { display: grid; grid-template-columns: minmax(0, 1fr); grid-template-rows: 155px minmax(0, 1fr); row-gap: 2px; padding: 1px 0 1px 2px; min-height: 0; min-width: 0; }
    .status { height: 12px; flex: none; display: grid; grid-template-columns: minmax(0, 1fr) 56px 52px 34px 34px 34px 34px 29px 65px; align-items: center; border-top: 1px solid #ccc; }
    .status span { border-left: 1px solid #bbb; padding-left: 2px; height: 8px; white-space: nowrap; display: flex; gap: 2px; align-items: center; }
    .status span:first-child { border: 0; padding-left: 1px; }
  `];
  render() {
    return html`
      <header class="title">
        <svg class="logo" width="8" height="9" viewBox="0 0 8 9"><rect y="1" width="8" height="8" rx="1" fill="#4a9a3c"/><rect x="2" y="3" width="4" height="4" fill="#d8ecc8"/></svg>
        <span class="mask"></span><h1>FBS-Demo - [EURUSD,M15]</h1><span class="behind"></span>
        <div class="win"><button aria-label="Minimize"><svg width="6" height="6"><path d="M1 4h4" stroke="#fff" stroke-width="1.5"/></svg></button><button aria-label="Maximize"><svg width="6" height="6"><rect x="1" y="1" width="4" height="4" fill="none" stroke="#fff"/></svg></button><button class="x" aria-label="Close"><svg width="6" height="6"><path d="M1 1l4 4M5 1L1 5" stroke="#fff" stroke-width="1.3"/></svg></button></div>
      </header>
      <div class="menu">${I.mdi}<nav>${["File", "View", "Insert", "Charts", "Tools", "Window", "Help"].map((m) => html`<button>${m}</button>`)}</nav>
        <div class="mdi"><button aria-label="Minimize chart">-</button><button aria-label="Restore chart"><svg width="5" height="5"><path d="M1.5 2V.5h3v3H3M.5 2h2.5v2.5H.5z" fill="none" stroke="#345" stroke-width=".7"/></svg></button><button aria-label="Close chart">×</button></div></div>
      <div class="bar">${btn("New chart", I.newChart, false, true)}${btn("Profiles", I.profiles, false, true)}${sep}
        ${btn("Market Watch", I.watch, true)}${btn("Data window", I.cross)}${btn("Navigator", I.nav, true)}${btn("Terminal", I.term, true)}${btn("Strategy tester", I.tester)}${sep}
        <button class="txt">${I.order}New Order</button>${btn("MetaEditor", I.gold)}<button class="txt">${I.auto}AutoTrading</button>${sep}
        ${btn("Bar chart", I.bars)}${btn("Candlesticks", I.candles, true)}${btn("Line chart", I.line)}${sep}
        ${btn("Zoom in", I.zin)}${btn("Zoom out", I.zout)}${btn("Tile windows", I.tile)}${sep}
        ${btn("Auto scroll", I.scroll, true)}${btn("Chart shift", I.shift, true)}${sep}
        ${btn("Indicators", I.ind, false, true)}${btn("Periods", I.clock, false, true)}${btn("Templates", I.tpl, false, true)}${sep}
        <div class="far">${btn("Search", I.search)}${btn("Chat", I.chat)}</div></div>
      <div class="bar two">${btn("Cursor", I.arrow, true)}${btn("Crosshair", I.plusThin)}${sep}
        ${btn("Vertical line", I.vline)}${btn("Horizontal line", I.hline)}${btn("Trendline", I.trend)}${btn("Channel", I.chan)}${btn("Fibonacci", I.fib)}
        <button class="tb a">A</button><button class="tb t"><span>T</span></button>${btn("Arrows", I.arrows, false, true)}${sep}
        ${["M1", "M5", "M15", "M30", "H1", "H4", "D1", "W1", "MN"].map((t) => html`<button class=${classMap({ tb: true, tf: true, on: t === "M15" })}>${t}</button>`)}${sep}</div>
      <main class="body">
        <div class="left"><market-watch></market-watch><nav-panel></nav-panel></div>
        <price-chart></price-chart>
      </main>
      <terminal-panel></terminal-panel>
      <footer class="status"><span>For Help, press F1</span><span>Default</span><span>2018.06.12 11:30</span><span>O: 1.17947</span><span>H: 1.18035</span><span>L: 1.17939</span><span>C: 1.17975</span><span>V: 1741</span>
        <span><svg width="12" height="7" viewBox="0 0 12 7"><path d="M1 0v7M3 0v7M5 0v7M7 0v7" stroke="#3f9a3a" stroke-width="1.4"/><path d="M9 0v7M11 0v7" stroke="#3a62b0" stroke-width="1.4"/><path d="M0 5h6" stroke="#d8c030"/></svg>225/2 kb</span></footer>
      <task-bar></task-bar>`;
  }
}
